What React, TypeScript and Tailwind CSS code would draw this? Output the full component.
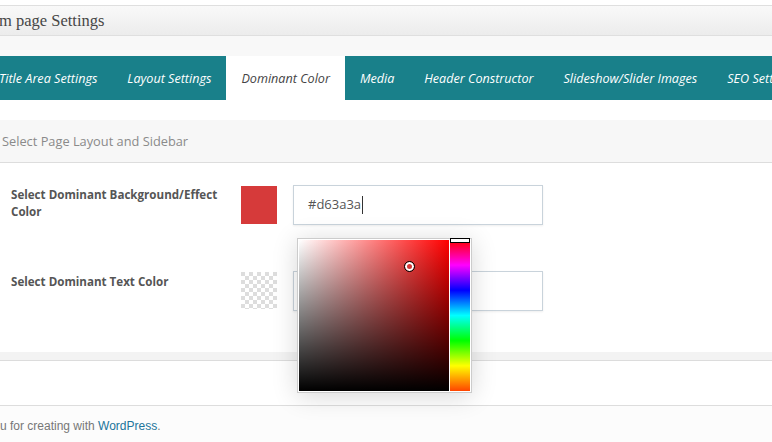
import React from "react";

const tabs = [
  "Title Area Settings",
  "Layout Settings",
  "Dominant Color",
  "Media",
  "Header Constructor",
  "Slideshow/Slider Images",
  "SEO Settings",
];

const ColorPicker: React.FC = () => {
  return (
    <div className="absolute left-[297px] top-[238px] flex gap-[1px] border border-[#cccccc] bg-white p-[1px] shadow-[0_3px_24px_rgba(0,0,0,0.16)]">
      <div className="relative h-[151px] w-[150px] bg-[image:linear-gradient(to_top,#000,transparent),linear-gradient(to_right,#fff,#f00)]">
        <div className="absolute left-[105px] top-[21px] h-[11px] w-[11px] rounded-full border border-black shadow-[inset_0_0_0_2px_#fff]" />
      </div>
      <div className="relative h-[151px] w-[20px] bg-[image:linear-gradient(to_bottom,#f00,#f0f,#00f,#0ff,#0f0,#ff0,#f40)]">
        <div className="absolute -top-[2px] left-0 h-[5px] w-[20px] border border-black bg-white" />
      </div>
    </div>
  );
};

export default function App() {
  return (
    <div className="relative h-[442px] w-[772px] overflow-hidden bg-white font-['Open_Sans',sans-serif]">
      {/* page header */}
      <div className="h-[5px] bg-white" />
      <div className="flex h-[31px] items-center border-y border-[#dfdfdf] bg-[image:linear-gradient(to_bottom,#f9f9f9,#ececec)] pt-[2px] font-['Liberation_Serif',serif] text-[16.5px] text-[#464646]">
        <span className="-ml-[1px]">m page Settings</span>
      </div>
      <div className="h-[20px] bg-[#f8f8f8]" />

      {/* tabs */}
      <div className="-ml-[16px] flex h-[44px] bg-[#19808a]">
        {tabs.map((t) => (
          <div
            key={t}
            className={
              t === "Dominant Color"
                ? "flex items-center whitespace-nowrap bg-white px-[15px] pt-[3px] text-[12.6px] italic text-[#444]"
                : "flex items-center whitespace-nowrap px-[15px] pt-[3px] text-[12.6px] italic text-white"
            }
          >
            {t}
          </div>
        ))}
      </div>
      <div className="h-[20px]" />

      {/* section */}
      <div className="flex h-[43px] items-center border-b border-[#dddddd] bg-[#f7f7f7] pl-[2px] pt-[2px] text-[12.8px] text-[#8a8a8a]">
        Select Page Layout and Sidebar
      </div>

      <div className="flex items-start pt-[22px]">
        <div className="w-[241px] pl-[11px] pt-[1px] text-[11.6px] font-bold leading-[17px] text-[#555]">
          Select Dominant Background/Effect Color
        </div>
        <div className="mt-[1px] h-[38px] w-[36px] bg-[#d63a3a]" />
        <div className="ml-[16px] flex h-[40px] w-[250px] items-center border border-[#c9d3db] pl-[14px] text-[13px] text-[#555] shadow-[0_1px_2px_rgba(0,0,0,0.07)]">
          #d63a3a
          <span className="ml-[1px] h-[18px] w-px bg-[#333]" />
        </div>
      </div>

      <div className="flex items-start pt-[46px]">
        <div className="w-[241px] pl-[11px] pt-[2px] text-[11.6px] font-bold leading-[17px] text-[#555]">
          Select Dominant Text Color
        </div>
        <div className="mt-[1px] h-[37px] w-[36px] bg-[image:conic-gradient(#fff_25%,#ddd_0_50%,#fff_0_75%,#ddd_0)] bg-[length:8px_8px]" />
        <div className="ml-[16px] h-[40px] w-[250px] border border-[#c9d3db] shadow-[0_1px_2px_rgba(0,0,0,0.07)]" />
      </div>

      <div className="mt-[41px] h-[9px] border-b border-[#dcdcdc] bg-[#f3f3f3]" />
      <div className="h-[44px]" />

      {/* footer */}
      <div className="h-[40px] border-t border-[#dddddd] bg-[#fcfcfc] pt-[11px] font-['Liberation_Sans',Arial,sans-serif] text-[12px] text-[#777]">
        u for creating with <span className="text-[#21759b]">WordPress</span>.
      </div>

      <ColorPicker />
    </div>
  );
}
